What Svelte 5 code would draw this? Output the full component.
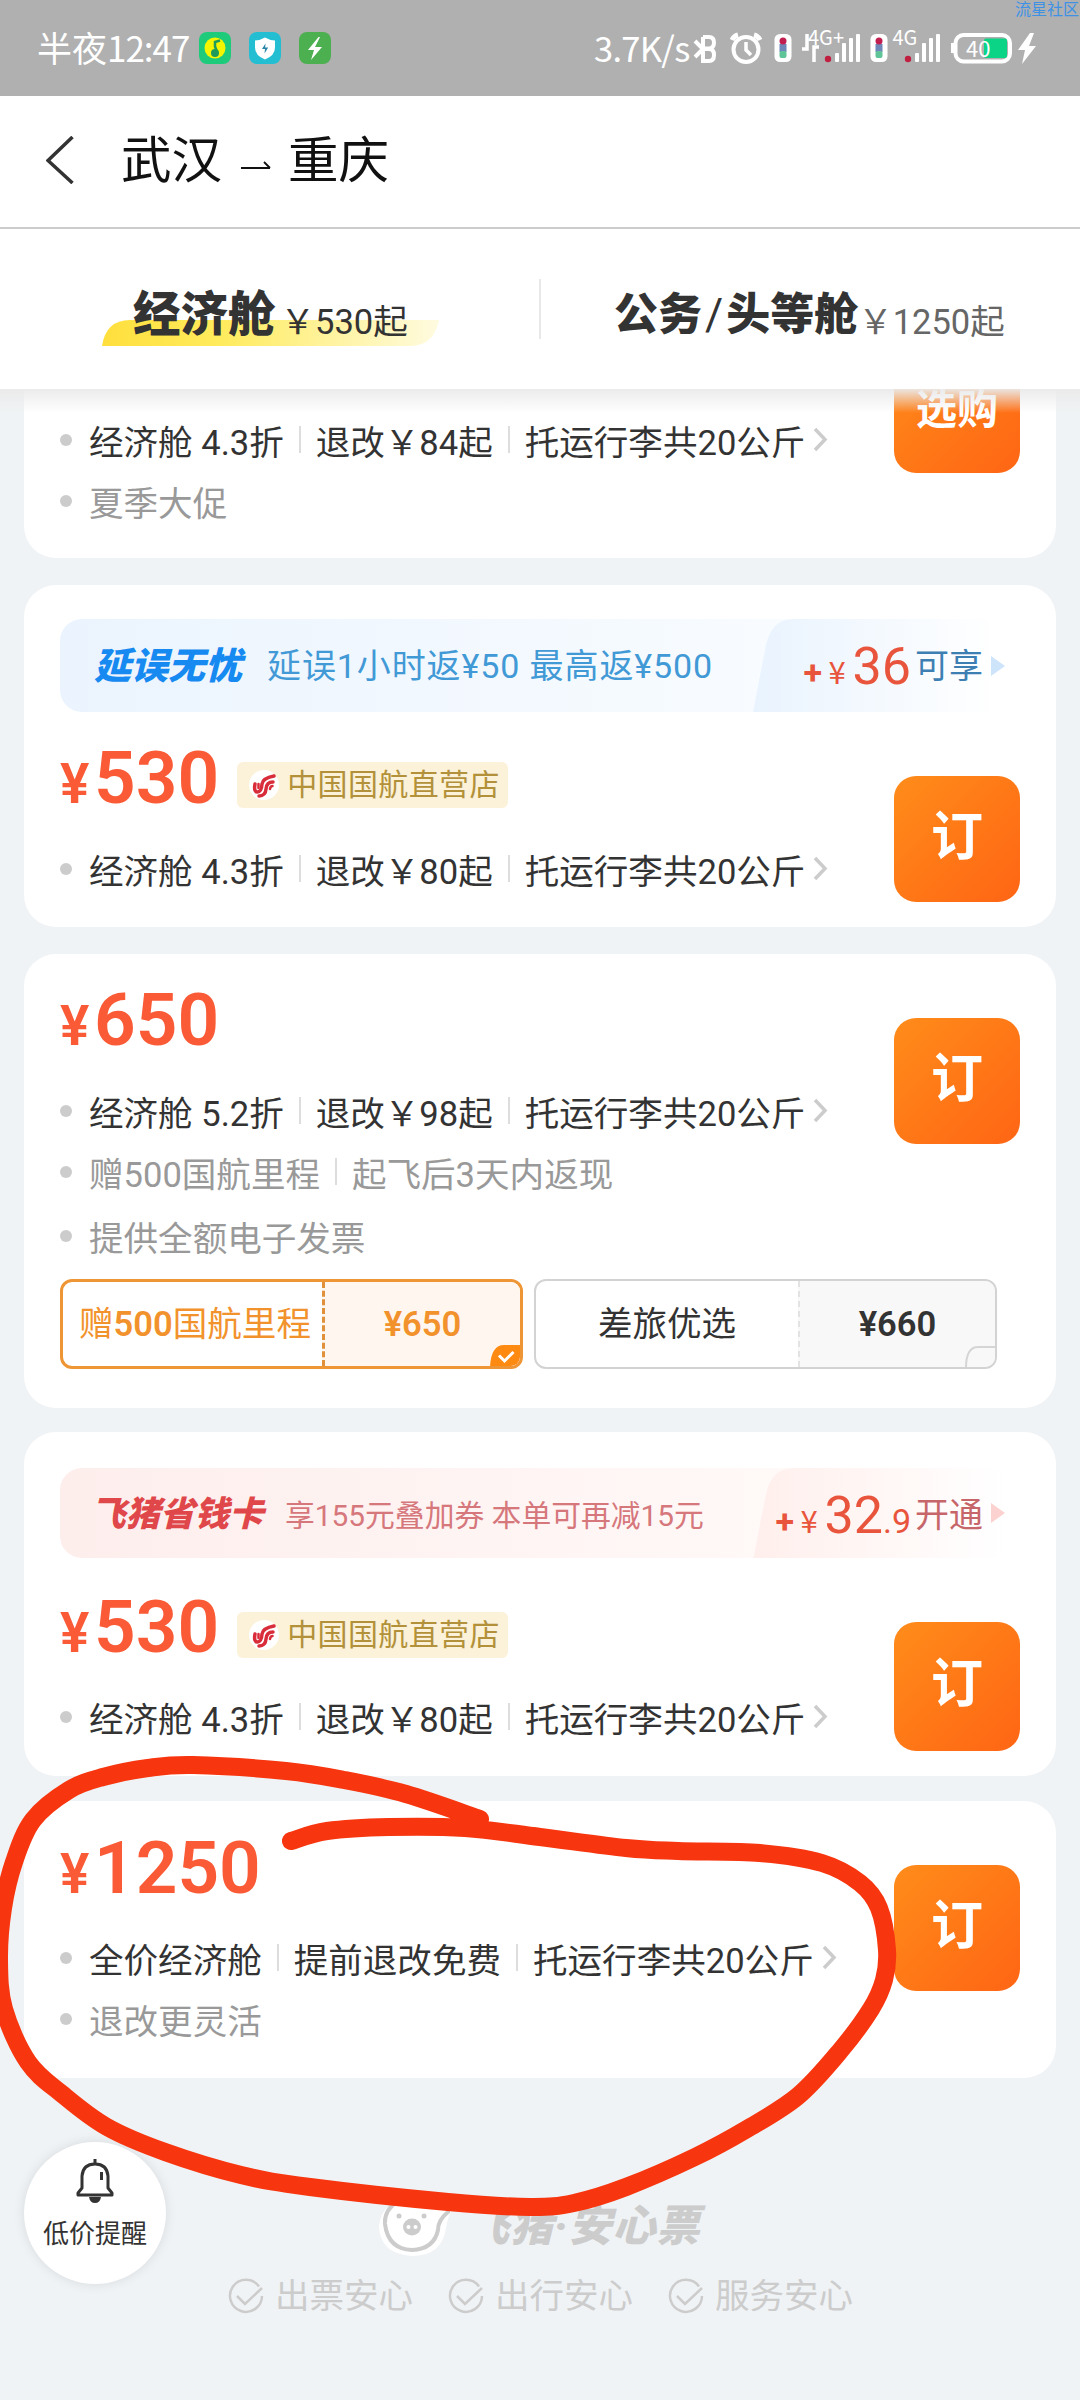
<script>
	// fullwidth yen sign, takes a whole CJK cell
	const yen = '\uFFE5';

	const cards = [
		{
			id: 'sale',
			button: '选购',
			rows: [
				{ parts: ['经济舱 4.3折', `退改${yen}84起`, '托运行李共20公斤'], link: true },
				{ parts: ['夏季大促'], muted: true }
			]
		},
		{
			id: 'delay',
			button: '订',
			banner: {
				theme: 'blue',
				title: '延误无忧',
				text: '延误1小时返¥50 最高返¥500',
				amount: '36',
				cents: '',
				action: '可享'
			},
			price: '530',
			tag: '中国国航直营店',
			rows: [{ parts: ['经济舱 4.3折', `退改${yen}80起`, '托运行李共20公斤'], link: true }]
		},
		{
			id: 'miles',
			button: '订',
			price: '650',
			rows: [
				{ parts: ['经济舱 5.2折', `退改${yen}98起`, '托运行李共20公斤'], link: true },
				{ parts: ['赠500国航里程', '起飞后3天内返现'], muted: true },
				{ parts: ['提供全额电子发票'], muted: true }
			],
			options: [
				{ name: '赠500国航里程', price: '¥650', active: true },
				{ name: '差旅优选', price: '¥660', active: false }
			]
		},
		{
			id: 'member',
			button: '订',
			banner: {
				theme: 'red',
				title: '飞猪省钱卡',
				text: '享155元叠加券 本单可再减15元',
				amount: '32',
				cents: '.9',
				action: '开通'
			},
			price: '530',
			tag: '中国国航直营店',
			rows: [{ parts: ['经济舱 4.3折', `退改${yen}80起`, '托运行李共20公斤'], link: true }]
		},
		{
			id: 'full',
			button: '订',
			price: '1250',
			rows: [
				{ parts: ['全价经济舱', '提前退改免费', '托运行李共20公斤'], link: true },
				{ parts: ['退改更灵活'], muted: true }
			]
		}
	];

	const promises = ['出票安心', '出行安心', '服务安心'];

	// Centre line of the hand-drawn marker loop
	const marker = [
		[480, 1819], [406, 1794], [344, 1780], [286, 1771], [193, 1765], [148, 1768], [103, 1777],
		[69, 1790], [33, 1820], [14, 1862], [3, 1908], [-1, 1959], [4, 2009], [28, 2062],
		[62, 2094], [107, 2127], [165, 2152], [241, 2175], [310, 2187], [448, 2202], [530, 2207],
		[574, 2203], [626, 2187], [695, 2157], [747, 2129], [798, 2096], [840, 2051], [871, 2009],
		[884, 1980], [887, 1950], [879, 1908], [860, 1883], [822, 1863], [760, 1853], [678, 1851],
		[626, 1848], [540, 1837], [465, 1828], [389, 1827], [327, 1831], [291, 1841]
	];

	/** @param {number[][]} pts */
	function smooth(pts) {
		let d = `M${pts[0]}`;
		for (let i = 0; i < pts.length - 1; i++) {
			const a = pts[i - 1] ?? pts[i];
			const b = pts[i];
			const c = pts[i + 1];
			const e = pts[i + 2] ?? c;
			d += `C${b[0] + (c[0] - a[0]) / 6} ${b[1] + (c[1] - a[1]) / 6} ${c[0] - (e[0] - b[0]) / 6} ${c[1] - (e[1] - b[1]) / 6} ${c[0]} ${c[1]}`;
		}
		return d;
	}
</script>

<div class="screen">
	<div class="status">
		<div class="clock">半夜<span>12:47</span></div>
		<svg class="app" viewBox="0 0 32 32">
			<rect width="32" height="32" rx="8" fill="#1ecb7b" />
			<circle cx="16" cy="16" r="10.5" fill="#f4f500" />
			<circle cx="16" cy="21" r="4" fill="#1e9b5b" />
			<path d="M18.500 21 16 14.500V10l5-1.500" fill="none" stroke="#1e9b5b" stroke-width="2.500" />
		</svg>
		<svg class="app" viewBox="0 0 32 32">
			<rect width="32" height="32" rx="8" fill="#24bed2" />
			<path d="M16 5.500Q20 8 26 8.500v7q0 8-10 12-10-4-10-12v-7Q12 8 16 5.500z" fill="#fff" />
			<path d="M16.500 11.500 13 17h3l-.5 4.500 3.700-6h-3z" fill="#2a86a8" />
		</svg>
		<svg class="app" viewBox="0 0 32 32">
			<rect width="32" height="32" rx="8" fill="#4caf50" />
			<path d="M19.500 5 9 18h6l-3 10 11-13h-7l5-10z" fill="#fff" />
		</svg>
		<div class="speed">3.7K/s</div>
		<svg class="signals" viewBox="694 0 386 96">
			<g fill="none" stroke="#fff" stroke-width="4">
				<path d="M696 41l8 8-8 8M704 37h6q5 0 5 5.500t-5 6h-4M704 49h6q5 0 5 6t-5 6h-6z" />
				<path d="M704 37v24" />
				<circle cx="747" cy="49.500" r="12.500" />
				<path d="M747 42v8l5 5" stroke-width="3.500" />
				<path d="M733 40q2-4 6-5M761 40q-2-4-6-5" stroke-width="5" />
				<path d="M803 49h5V34M820 47h-5v15" stroke-width="3.500" />
				<rect x="956.500" y="35" width="54.500" height="26.500" rx="8" />
			</g>
			{#each [775.5, 871.5] as x (x)}
				<rect {x} y="34" width="17" height="28" rx="5.500" fill="#fff" />
				<rect x={x + 5} y="44" width="7" height="8" fill="#6f86b8" />
				<rect x={x + 5} y="51" width="7" height="7" rx="2" fill="#5fc497" />
				<circle cx={x + 8.5} cy="41" r="3.500" fill="#c01f4f" />
			{/each}
			{#each [836, 916] as x (x)}
				<g fill="#fff">
					<rect {x} y="53" width="4" height="9" rx="1" />
					<rect x={x + 7} y="43" width="4" height="19" rx="1" />
					<rect x={x + 14} y="38" width="4" height="24" rx="1" />
					<rect x={x + 21} y="34" width="4" height="28" rx="1" />
				</g>
				<circle cx={x - 7} cy="59" r="3.200" fill="#c01f3f" />
			{/each}
			<text x="809" y="45" font-size="20" fill="#fff">4G+</text>
			<text x="893.500" y="45" font-size="20" fill="#fff">4G</text>
			<rect x="952" y="43" width="5" height="10" fill="#fff" />
			<rect x="985" y="38.500" width="23" height="19.500" rx="2" fill="#0bd487" />
			<text x="967" y="56.500" font-size="22" fill="#fff">40</text>
			<path d="M1031 33 1019 50h7l-3 14 14-18h-7l5-13z" fill="#fff" />
		</svg>
		<div class="watermark">流星社区</div>
	</div>

	<header>
		<svg class="back" viewBox="0 0 28 48">
			<path d="M26.500 1 2 24.500 26.500 47" fill="none" stroke="#333" stroke-width="3.500" />
		</svg>
		<span>武汉</span>
		<svg class="arrow" viewBox="0 0 30 12">
			<path d="M0 9h29M23 3l6 6" fill="none" stroke="#111" stroke-width="1.800" />
		</svg>
		<span>重庆</span>
	</header>

	<nav>
		<div class="tab economy">
			<b>经济舱</b><span>{yen}530起</span>
			<svg class="highlight" viewBox="0 0 337 26">
				<defs>
					<linearGradient id="swoosh">
						<stop offset="0" stop-color="#ffdf3d" />
						<stop offset=".35" stop-color="#ffeb5c" />
						<stop offset="1" stop-color="#fffbe0" />
					</linearGradient>
				</defs>
				<path d="M0 26Q4 0 28 0H337Q332 26 308 26Z" fill="url(#swoosh)" />
			</svg>
		</div>
		<i></i>
		<div class="tab business"><b>公务<em>/</em>头等舱</b><span>{yen}1250起</span></div>
	</nav>

	<main>
		{#each cards as card (card.id)}
			<section class="card {card.id}">
				{#if card.banner}
					<div class="banner {card.banner.theme}">
						<strong>{card.banner.title}</strong>
						<span class="promo">{card.banner.text}</span>
						<div class="extra">
							<b>+</b><small>¥</small><span class="amount">{card.banner.amount}</span>
							<span class="cents">{card.banner.cents}</span>
							<span class="action">{card.banner.action}</span>
							<svg viewBox="0 0 14 20"><path d="M0 0 14 10 0 20z" /></svg>
						</div>
					</div>
				{/if}
				<div class="body">
					<div class="info">
						<div class="price">
							{#if card.price}
								<small>¥</small><b>{card.price}</b>
							{/if}
							{#if card.tag}
								<span class="tag">
									<svg viewBox="0 0 30 30">
										<circle cx="15" cy="15" r="15" fill="#fff" />
										<g fill="none" stroke="#d92c3a" stroke-linecap="round">
											<path d="M6 14q-1.500 8 2.500 8t4.500-8q1-6 12-8" stroke-width="3.500" />
											<path d="M10 26q6.500 0 7-7 .5-7 7-7" stroke-width="3.500" />
											<path d="M9.500 14v4M21 19q.5-3 2.500-3" stroke-width="2.500" />
										</g>
									</svg>
									{card.tag}
								</span>
							{/if}
						</div>
						{#each card.rows as row, i (i)}
							<div class="row" class:muted={row.muted}>
								{#each row.parts as part (part)}
									<span>{part}</span>
								{/each}
								{#if row.link}
									<svg viewBox="0 0 15 25">
										<path d="M2 2l10 10.500L2 23" fill="none" stroke="#ccc" stroke-width="3.500" />
									</svg>
								{/if}
							</div>
						{/each}
					</div>
					<button class:small={card.button.length > 1}>{card.button}</button>
				</div>
				{#if card.options}
					<div class="options">
						{#each card.options as option (option.name)}
							<div class="option" class:active={option.active}>
								<span class="name">
									{#each option.name.split(/(\d+)/) as piece, i (i)}{#if i % 2}<b>{piece}</b>{:else}{piece}{/if}{/each}
								</span>
								<span class="cost">{option.price}</span>
								<svg class="corner" viewBox="0 0 31 22">
									{#if option.active}
										<path d="M0 22Q1 0 14 0H31V22Z" fill="#ff8a12" />
										<path d="M9 10.500l5.500 5.500 9-9" fill="none" stroke="#fff" stroke-width="3" />
									{:else}
										<path d="M1 22Q1 1 13 1H31" fill="none" stroke="#d5d5d5" stroke-width="2" />
									{/if}
								</svg>
							</div>
						{/each}
					</div>
				{/if}
			</section>
		{/each}
	</main>

	<footer>
		<div class="brand">
			<svg viewBox="0 0 80 64">
				<path
					d="M34 2Q66-4 80 6 70 16 68 32 64 60 34 60 2 58 1 30 4 4 34 2z"
					fill="#fff"
				/>
				<path
					d="M20 5Q6 14 7 28 10 53 34 54 56 53 60 34 60 24 70 16L71 8 62 10Q48 0 34 2"
					fill="none"
					stroke="#ccc"
					stroke-width="4"
				/>
				<ellipse cx="34" cy="31" rx="9" ry="8.500" fill="#ccc" />
				<circle cx="30.500" cy="31" r="2" fill="#fff" />
				<circle cx="37.500" cy="31" r="2" fill="#fff" />
				<circle cx="21" cy="20" r="2.500" fill="#ccc" />
				<circle cx="46" cy="20" r="2.500" fill="#ccc" />
			</svg>
			<strong>飞猪·安心票</strong>
		</div>
		<div class="promises">
			{#each promises as promise (promise)}
				<div>
					<svg viewBox="0 0 36 36" fill="none" stroke="#ccc" stroke-width="2.500">
						<path d="M31 8.500A16 16 0 1 0 34 18" />
						<path d="M9 18l8 8L34 10" />
					</svg>
					{promise}
				</div>
			{/each}
		</div>
	</footer>

	<div class="alert">
		<svg viewBox="0 0 38 46" fill="none" stroke="#333" stroke-width="3">
			<path d="M6 30V18Q7 6 19 6T32 18V30L36 35V37H2V35Z" stroke-linejoin="round" />
			<path d="M19 1v5M25.500 14v8" />
			<path d="M13 39h12q-1 6-6 6t-6-6z" fill="#333" stroke="none" />
		</svg>
		低价提醒
	</div>

	<svg class="marker" viewBox="0 0 1080 2400">
		<path d={smooth(marker)} />
	</svg>
</div>

<style>
	:global(body) {
		margin: 0;
	}

	.screen {
		position: relative;
		width: 1080px;
		height: 2400px;
		overflow: hidden;
		background: #f0f3f5;
		color: #333;
		font-family: Roboto, 'Noto Sans CJK SC', sans-serif;
	}

	svg {
		display: block;
		flex: none;
	}

	.status {
		position: relative;
		display: flex;
		align-items: center;
		height: 96px;
		padding-left: 37px;
		box-sizing: border-box;
		background: #b0b0b0;
		color: #fff;
		font-family: 'Noto Sans CJK SC', sans-serif;
		font-size: 35px;
		font-weight: 400;
	}

	.clock {
		width: 162px;
		padding-bottom: 3px;
		white-space: nowrap;
	}

	.clock span {
		letter-spacing: -1px;
	}

	.app {
		width: 32px;
		height: 32px;
		margin-right: 18px;
	}

	.speed {
		width: 99px;
		margin-left: 245px;
		padding-bottom: 3px;
		font-size: 34.5px;
		letter-spacing: -0.7px;
		white-space: nowrap;
	}

	.signals {
		width: 386px;
		height: 96px;
	}

	.watermark {
		position: absolute;
		top: 0;
		left: 1015px;
		color: #3d92e6;
		font-size: 16px;
		line-height: 16px;
		white-space: nowrap;
	}

	header {
		display: flex;
		align-items: center;
		height: 133px;
		padding: 0 0 4px 46px;
		box-sizing: border-box;
		border-bottom: 2px solid #ccc;
		background: #fff;
		color: #111;
		font-size: 50.5px;
	}

	header span {
		padding-bottom: 8px;
	}

	.back {
		width: 28px;
		height: 48px;
		margin-right: 47px;
	}

	.arrow {
		width: 30px;
		height: 12px;
		margin: 10px 17px 0 19px;
	}

	nav {
		position: relative;
		z-index: 1;
		display: flex;
		align-items: center;
		height: 160px;
		background: #fff;
	}

	nav::after {
		content: '';
		position: absolute;
		top: 100%;
		left: 0;
		width: 100%;
		height: 24px;
		background: linear-gradient(rgba(234, 234, 234, 0.95), rgba(250, 250, 250, 0));
	}

	nav i {
		width: 2px;
		height: 60px;
		background: #e8e8e8;
	}

	.tab {
		position: relative;
		z-index: 0;
		display: flex;
		align-items: flex-start;
		box-sizing: border-box;
		height: 70px;
		padding-top: 6px;
		line-height: 70px;
		white-space: nowrap;
	}

	.tab b {
		font-size: 47.5px;
		font-weight: 900;
	}

	.tab span {
		margin-top: 7px;
		font-size: 34.5px;
	}

	.economy {
		width: 539px;
		padding-left: 133px;
	}

	.economy span {
		margin-left: 5px;
	}

	.highlight {
		position: absolute;
		z-index: -1;
		top: 46px;
		left: 102px;
		width: 337px;
		height: 26px;
	}

	.business {
		padding-left: 73px;
	}

	.business b {
		font-size: 44px;
	}

	.business em {
		margin: 0 3px;
		font-style: normal;
		font-weight: 400;
	}

	.business span {
		color: #666;
	}

	main {
		height: 1689px;
		overflow: hidden;
	}

	.card {
		width: 1032px;
		margin: 0 0 24px 24px;
		overflow: hidden;
		border-radius: 32px;
		background: #fff;
	}

	/* first card is scrolled up under the tabs */
	.sale {
		height: 275px;
		margin-top: -106px;
		margin-bottom: 27px;
	}

	.delay {
		height: 342px;
		margin-bottom: 27px;
	}

	.miles {
		height: 454px;
	}

	.member {
		height: 344px;
		margin-bottom: 25px;
	}

	.full {
		height: 277px;
	}

	.body {
		display: flex;
		justify-content: space-between;
		padding: 0 36px;
	}

	.price {
		display: flex;
		align-items: baseline;
		height: 129px;
		color: #fa5a35;
		line-height: 132px;
	}

	.full .price {
		line-height: 135px;
	}

	.member .price {
		height: 131px;
		line-height: 138px;
	}

	.price small {
		width: 34px;
		font-size: 55px;
		font-weight: 600;
	}

	.price b {
		font-size: 73px;
		font-weight: 600;
	}

	.tag {
		display: flex;
		align-items: center;
		align-self: flex-start;
		height: 46px;
		margin: 50px 0 0 18px;
		padding: 0 8px 0 12px;
		border-radius: 6px;
		background: #fbf2d9;
		color: #b3913a;
		font-size: 30px;
		letter-spacing: 0.4px;
		line-height: 46px;
		white-space: nowrap;
	}

	.member .tag {
		margin-top: 54px;
	}

	.tag svg {
		width: 30px;
		height: 30px;
		margin-right: 8px;
	}

	.row {
		display: flex;
		align-items: center;
		height: 61px;
		font-size: 34.56px;
		line-height: 61px;
		white-space: nowrap;
	}

	.row::before {
		content: '';
		width: 12px;
		height: 12px;
		margin: 0 17px 6px 0;
		border-radius: 50%;
		background: #ccc;
	}

	.row span {
		padding-top: 2px;
	}

	.row span + span {
		display: flex;
		align-items: center;
	}

	.row span + span::before {
		content: '';
		width: 2px;
		height: 27px;
		margin: 0 15px 8px;
		background: #ddd;
	}

	.row svg {
		width: 15px;
		height: 25px;
		margin: 0 0 6px 8px;
	}

	.muted {
		color: #999;
	}

	.row:nth-child(4) {
		margin-top: 3px;
	}

	button {
		width: 126px;
		height: 126px;
		margin-top: 64px;
		padding: 0 0 14px;
		border: 0;
		border-radius: 22px;
		background: linear-gradient(135deg, #ff8c1a, #ff6514);
		color: #fff;
		font-family: inherit;
		font-size: 52px;
		font-weight: 700;
	}

	button.small {
		padding-bottom: 9px;
		font-size: 41px;
	}

	.member button {
		height: 129px;
	}

	.banner {
		display: flex;
		align-items: center;
		height: 93px;
		margin: 34px 46px 0 36px;
		padding-left: 34px;
		border-radius: 22px;
		white-space: nowrap;
	}

	.banner strong {
		padding-bottom: 5px;
		font-size: 37px;
		font-style: italic;
		font-weight: 900;
	}

	.promo {
		flex: 1;
		padding-bottom: 4px;
		font-size: 34px;
		letter-spacing: 0.9px;
	}

	.extra {
		display: flex;
		align-items: baseline;
		justify-content: flex-end;
		width: 257px;
		height: 100%;
		box-sizing: border-box;
		clip-path: path('M0 93L13 26Q19 0 40 0H260V93Z');
		line-height: 96px;
	}

	.extra b,
	.extra small,
	.amount,
	.cents {
		color: #e8553c;
	}

	.extra b {
		width: 25px;
		font-size: 34px;
		font-weight: 700;
	}

	.extra small {
		width: 24px;
		font-family: 'Noto Sans CJK SC', sans-serif;
		font-size: 31px;
	}

	.amount {
		font-size: 52px;
	}

	.cents {
		font-size: 34px;
	}

	.action {
		align-self: flex-start;
		margin: 0 8px 0 4px;
		font-size: 34px;
		line-height: 94px;
	}

	.extra svg {
		align-self: center;
		width: 14px;
		height: 20px;
		margin: 0 5px 0 0;
	}

	.blue {
		background: linear-gradient(90deg, #ebf4fe, #f7fbff 70%, #fff);
	}

	.blue strong {
		color: #168af0;
		width: 173px;
	}

	.blue .promo {
		color: #4199d6;
	}

	.blue .extra {
		background: linear-gradient(90deg, #e9f3fe, #fff 95%);
	}

	.blue .action {
		color: #3d7fb3;
	}

	.blue path {
		fill: #cde4fb;
	}

	.red {
		height: 90px;
		margin-top: 36px;
		padding-left: 31px;
		background: linear-gradient(90deg, #fdeeec, #fff8f7 70%, #fff);
	}

	.red strong {
		width: 194px;
		color: #e0474a;
		font-size: 34.5px;
	}

	.red .promo {
		padding-bottom: 0;
		color: #d6777c;
		font-size: 29.8px;
		letter-spacing: 0;
	}

	.red .extra {
		background: linear-gradient(90deg, #ffefec, #fff 98%);
		line-height: 95px;
	}

	.red .action {
		color: #c7666a;
		line-height: 94px;
	}

	.red path {
		fill: #fcd2d0;
	}

	.options {
		display: flex;
		gap: 11px;
		padding: 10px 0 0 36px;
	}

	.option {
		position: relative;
		display: flex;
		width: 463px;
		height: 90px;
		box-sizing: border-box;
		overflow: hidden;
		border: 2px solid #d3d3d3;
		border-radius: 12px;
		font-size: 34.56px;
		line-height: 86px;
		text-align: center;
	}

	.name {
		width: 262px;
	}

	.cost {
		flex: 1;
		border-left: 2px dashed #e3e3e3;
		background: #f8f8f8;
		font-weight: 600;
	}

	.corner {
		position: absolute;
		right: -1px;
		bottom: -1px;
		width: 31px;
		height: 22px;
	}

	.active {
		border: 3px solid #ee9535;
		color: #f2922c;
		line-height: 84px;
	}

	.active .name {
		width: 254px;
		padding-left: 5px;
	}

	.name b {
		font-weight: 600;
	}

	.active .cost {
		border-left: 3px dashed #e0913c;
		background: #fff6ef;
	}

	footer {
		padding-top: 118px;
		color: #ccc;
	}

	.brand {
		display: flex;
		align-items: center;
		height: 64px;
		padding-left: 378px;
	}

	.brand svg {
		width: 80px;
		height: 64px;
	}

	.brand strong {
		margin-left: 8px;
		padding-bottom: 12px;
		font-size: 43px;
		font-style: italic;
		font-weight: 900;
		letter-spacing: 1px;
	}

	.promises {
		display: flex;
		gap: 35px;
		margin-top: 10px;
		padding-left: 228px;
		font-size: 34.5px;
		line-height: 52px;
	}

	.promises div {
		display: flex;
		align-items: center;
		gap: 11px;
	}

	.promises svg {
		width: 36px;
		height: 36px;
	}

	.alert {
		position: absolute;
		top: 2142px;
		left: 24px;
		display: flex;
		flex-direction: column;
		align-items: center;
		width: 142px;
		height: 142px;
		padding-top: 16px;
		box-sizing: border-box;
		border-radius: 50%;
		background: #fff;
		box-shadow: 0 0 12px rgba(0, 0, 0, 0.1);
		font-size: 26px;
		line-height: 60px;
	}

	.alert svg {
		width: 38px;
		height: 46px;
	}

	.marker {
		position: absolute;
		z-index: 2;
		top: 0;
		left: 0;
		width: 1080px;
		height: 2400px;
		pointer-events: none;
	}

	.marker path {
		fill: none;
		stroke: #f7350f;
		stroke-width: 18;
		stroke-linecap: round;
		stroke-linejoin: round;
	}
</style>
